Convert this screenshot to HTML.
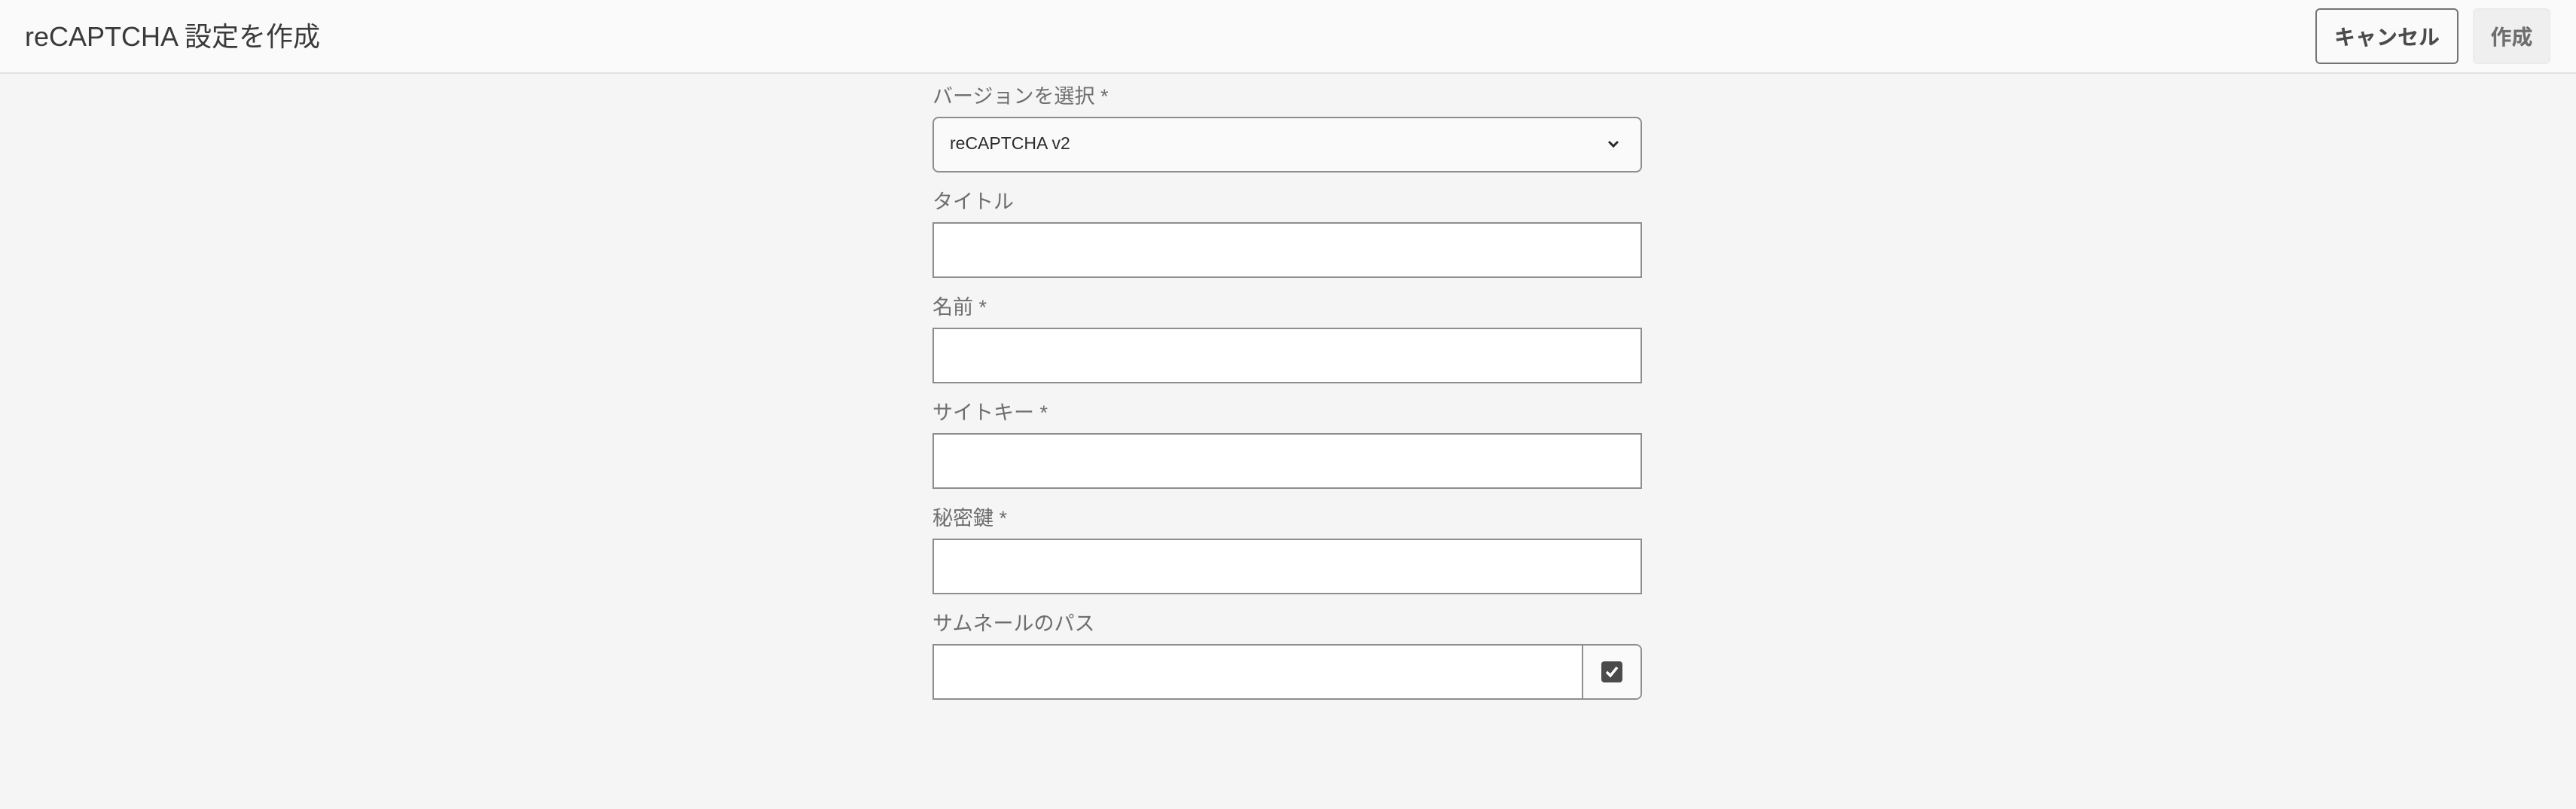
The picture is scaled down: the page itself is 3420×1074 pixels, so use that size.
<!DOCTYPE html>
<html><head><meta charset="utf-8"><style>
*{margin:0;padding:0;box-sizing:border-box}
body{width:3420px;height:1074px;background:#f5f5f5;font-family:"Liberation Sans","Noto Sans CJK JP",sans-serif;position:relative;overflow:hidden}
.hdr{position:absolute;left:0;top:0;width:3420px;height:98px;background:#fafafa;border-bottom:2px solid #e2e2e2}
.title{position:absolute;left:33px;top:24px;font-size:36px;color:#3a3a3a;line-height:50px}
.btn{position:absolute;top:11px;height:74px;border-radius:6px;font-size:28px;font-weight:bold;color:#4b4b4b;display:flex;align-items:center;justify-content:center}
.cancel{left:3074px;width:190px;border:2px solid #747474;background:#fafafa}
.create{left:3283px;width:103px;background:#efefef;border:2px solid #ebebeb;color:#6e6e6e}
.lbl{position:absolute;left:1238px;font-size:27px;color:#6e6e6e;line-height:36px}
.inp{position:absolute;left:1238px;width:942px;height:74px;background:#fff;border:2px solid #8e8e8e}
.sel{background:#fafafa;border-radius:8px;border-color:#8e8e8e}
.sel span{position:absolute;left:21px;top:20px;font-size:23px;color:#2c2c2c}
.chev{position:absolute;right:28px;top:28px}
.side{position:absolute;right:0;top:0;width:78px;height:70px;border-left:2px solid #8e8e8e;background:#fafafa;border-radius:0 6px 6px 0}
.cb{position:absolute;left:24px;top:21px;width:28px;height:28px;background:#4b4b4b;border-radius:4px}
</style></head><body>
<div class="hdr"><div class="title">reCAPTCHA 設定を作成</div>
<div class="btn cancel">キャンセル</div><div class="btn create">作成</div></div>

<div class="lbl" style="top:110px">バージョンを選択 *</div>
<div class="inp sel" style="top:155px"><span>reCAPTCHA v2</span>
<svg class="chev" width="16" height="12" viewBox="0 0 16 12"><path d="M2 3 L8 9 L14 3" fill="none" stroke="#2c2c2c" stroke-width="3"/></svg></div>

<div class="lbl" style="top:250px">タイトル</div>
<div class="inp" style="top:295px"></div>
<div class="lbl" style="top:390px">名前 *</div>
<div class="inp" style="top:435px"></div>
<div class="lbl" style="top:530px">サイトキー *</div>
<div class="inp" style="top:575px"></div>
<div class="lbl" style="top:670px">秘密鍵 *</div>
<div class="inp" style="top:715px"></div>
<div class="lbl" style="top:810px">サムネールのパス</div>
<div class="inp" style="top:855px;border-radius:0 8px 8px 0"><div class="side"><div class="cb">
<svg width="28" height="28" viewBox="0 0 28 28"><path d="M7 14 L12 19 L21 8" fill="none" stroke="#fff" stroke-width="3.5"/></svg></div></div></div>
</body></html>
